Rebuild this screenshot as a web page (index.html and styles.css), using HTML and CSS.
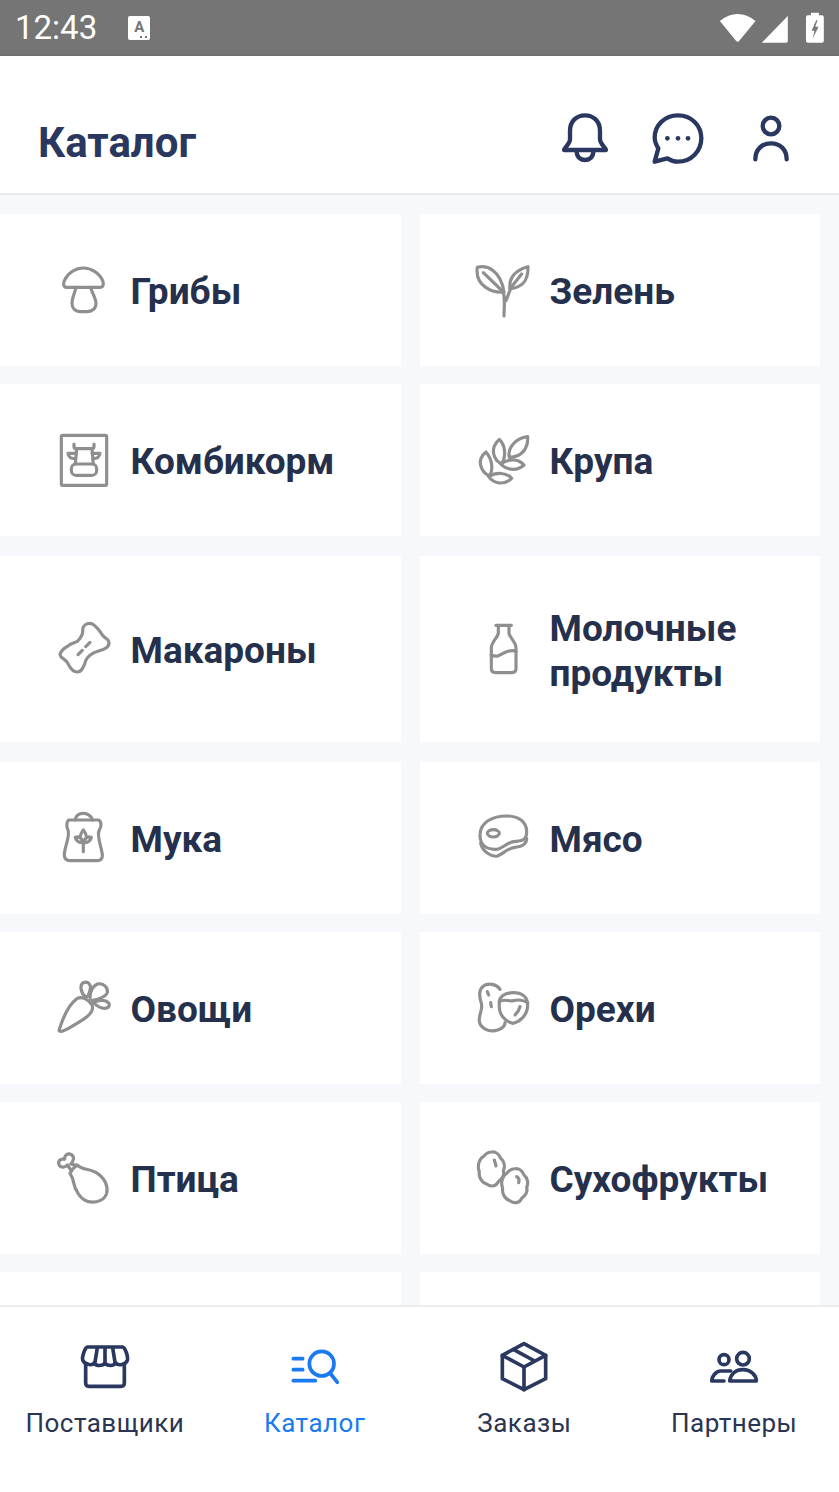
FILE: index.html
```html
<!DOCTYPE html>
<html lang="ru">
<head>
<meta charset="utf-8">
<title>Каталог</title>
<link rel="stylesheet" href="styles.css">
</head>
<body>
<div class="app">
  <div class="status">
    <span class="time">12:43</span>
    <span class="noti"><span class="noti-a">A</span><span class="noti-dots"></span></span>
    <svg class="status-icons" viewBox="590 30 330 100">
      <path class="sb" d="M597 60 C630 32 672 32 705 60 L656 120 Q651 126 646 120Z"/>
      <path class="sb" d="M803 45 V120 Q803 126 797 126 H724Z"/>
      <path class="sb" fill-rule="evenodd" d="M873 35 H897 V43 H906 Q912 43 912 49 V120 Q912 126 906 126 H864 Q858 126 858 120 V49 Q858 43 864 43 H873Z M889 58 L875 90 H884 L878 114 L896 78 H886 L893 58Z"/>
    </svg>
  </div>
  <header class="top">
    <h1 class="title">Каталог</h1>
    <div class="top-icons">
      <svg class="top-ico" viewBox="111 335 168 168">
        <path d="M150 395 C150 365 170 348 195 348 C220 348 240 365 240 395 V420 C240 435 258 445 258 452 H132 C132 445 150 435 150 420Z"/>
        <path d="M170 458 C172 490 218 490 220 458"/>
      </svg>
      <svg class="top-ico" viewBox="391 335 168 168">
        <path d="M405 487 L416 447 C408 434 405 425 405 415 C405 378 435 348 475 348 C515 348 545 378 545 417 C545 455 515 487 475 487 C462 487 452 483 443 477Z"/>
        <circle class="dot" cx="443" cy="417" r="7"/><circle class="dot" cx="475" cy="417" r="7"/><circle class="dot" cx="505" cy="417" r="7"/>
      </svg>
      <svg class="top-ico" viewBox="671 335 168 168">
        <circle cx="755" cy="380" r="25"/>
        <path d="M708 480 C708 450 728 432 755 432 C782 432 802 450 802 480"/>
      </svg>
    </div>
  </header>
  <main class="grid">
    <a class="card">
      <svg class="ico" viewBox="48 36 168 168">
        <path d="M80 112 C70 112 68 100 74 90 C84 68 108 54 130 54 C152 54 178 68 188 92 C192 102 190 112 180 112Z"/>
        <path d="M108 112 C104 130 96 145 96 160 C96 176 106 185 120 185 H140 C156 185 168 176 168 160 C168 145 156 130 152 112"/>
      </svg>
      <span class="label">Грибы</span>
    </a>
    <a class="card alt">
      <svg class="ico" viewBox="45 36 168 168">
        <path d="M52 52 C80 44 122 60 132 126 C100 130 44 110 52 52Z"/>
        <path d="M70 68 L130 126"/>
        <path d="M204 50 C205 90 190 112 150 116 C146 85 165 60 204 50Z"/>
        <path d="M185 72 L150 116"/>
        <path d="M132 198 C132 170 136 150 130 126 M138 152 L152 116"/>
      </svg>
      <span class="label">Зелень</span>
    </a>
    <a class="card">
      <svg class="ico" viewBox="48 546 168 168">
        <rect x="64" y="556" width="136" height="150" rx="4"/>
        <path d="M102 582 V590 Q102 596 110 596 H154 Q162 596 162 590 V582"/>
        <path d="M110 596 L106 642 M156 596 L160 642"/>
        <rect x="94" y="642" width="76" height="34" rx="14"/>
        <path d="M108 610 H84 Q86 626 106 626 M156 610 H180 Q178 626 158 626"/>
      </svg>
      <span class="label">Комбикорм</span>
    </a>
    <a class="card alt">
      <svg class="ico" viewBox="45 546 168 168">
        <path d="M203 560 C205 595 185 622 148 622 C142 595 165 565 203 560Z"/>
        <path d="M118 568 C135 585 140 615 125 642 C100 630 88 595 118 568Z"/>
        <path d="M192 645 C170 665 140 660 122 642 C145 625 175 625 192 645Z"/>
        <path d="M78 606 C98 630 100 660 88 678 C62 665 48 630 78 606Z"/>
        <path d="M155 685 C130 708 100 700 86 680 C110 665 140 668 155 685Z"/>
      </svg>
      <span class="label">Крупа</span>
    </a>
    <a class="card tall">
      <svg class="ico" viewBox="48 63 168 168">
        <path d="M150 70 C138 70 128 78 128 90 C130 102 124 112 112 124 C100 130 92 130 84 138 C76 144 64 148 60 164 C62 176 76 176 82 188 C88 196 92 216 112 216 C126 216 128 204 134 192 C136 178 144 168 158 160 C170 152 188 152 198 144 C206 138 210 130 204 120 C196 112 188 110 184 100 C178 92 164 70 150 70Z"/>
        <path d="M137 140 L150 127 M114 164 L127 151"/>
      </svg>
      <span class="label">Макароны</span>
    </a>
    <a class="card alt tall">
      <svg class="ico" viewBox="45 63 168 168">
        <path d="M108 76 H154"/>
        <path d="M115 76 V100 C112 115 94 125 94 145 V205 Q94 218 106 218 H156 Q168 218 168 205 V145 C168 125 150 115 147 100 V76"/>
        <path d="M94 165 C115 175 125 160 140 155 C150 152 160 150 168 154"/>
      </svg>
      <span class="label">Молочные продукты</span>
    </a>
    <a class="card">
      <svg class="ico" viewBox="48 630 168 168">
        <path d="M86 660 C80 665 78 678 84 690 C92 705 72 745 73 765 C73 775 78 782 90 782 H172 C182 782 188 775 187 765 C186 745 168 705 178 690 C186 676 184 664 176 660Z"/>
        <path d="M105 660 C108 645 118 640 130 640 C142 640 152 645 158 660"/>
        <path d="M130 755 V728 M130 690 C118 705 118 715 130 725 C142 715 142 705 130 690Z M130 728 C118 730 108 722 106 712 C118 708 126 715 130 728 M130 728 C142 730 152 722 154 712 C142 708 134 715 130 728"/>
      </svg>
      <span class="label">Мука</span>
    </a>
    <a class="card alt">
      <svg class="ico" viewBox="45 630 168 168">
        <path d="M60 705 C60 665 100 648 140 648 C175 648 200 665 200 695 C200 725 180 722 160 725 C135 730 125 750 105 748 C80 748 60 735 60 705Z"/>
        <path d="M62 730 C68 755 95 772 112 768 C130 762 140 745 165 742 C185 740 200 735 200 715"/>
        <ellipse cx="100" cy="700" rx="18" ry="11"/>
      </svg>
      <span class="label">Мясо</span>
    </a>
    <a class="card">
      <svg class="ico" viewBox="48 60 168 168">
        <path d="M58 208 C70 170 90 130 112 115 C125 108 145 118 156 135 C162 150 150 165 130 178 C105 194 75 212 65 214 C58 215 56 212 58 208Z"/>
        <path d="M138 112 C122 100 118 75 130 68 C145 62 155 75 150 90 C148 100 145 108 138 112"/>
        <path d="M150 115 C150 100 155 80 172 72 C190 68 205 82 202 98 C198 112 175 118 155 122"/>
        <path d="M160 128 C175 118 200 118 208 132 C208 148 185 152 160 128Z"/>
      </svg>
      <span class="label">Овощи</span>
    </a>
    <a class="card alt">
      <svg class="ico" viewBox="45 60 168 168">
        <path d="M120 88 C110 72 85 68 70 78 C55 90 58 112 64 130 C70 148 55 165 58 185 C62 205 85 215 105 212 C120 210 135 200 135 188"/>
        <path d="M82 95 L86 105 M92 128 L94 140"/>
        <path d="M118 130 C116 110 135 98 160 98 C185 98 203 110 203 135 C203 165 180 185 160 190 C135 185 115 165 118 130Z"/>
        <path d="M118 125 C135 115 145 125 160 122 C175 118 190 120 203 128"/>
        <path d="M180 140 C178 150 172 158 165 165"/>
      </svg>
      <span class="label">Орехи</span>
    </a>
    <a class="card">
      <svg class="ico" viewBox="48 570 168 168">
        <path d="M112 615 C124 630 150 625 172 640 C195 655 205 680 200 700 C194 720 170 730 145 725 C120 718 105 690 100 665 C98 650 92 645 90 640 C94 630 105 620 112 615Z"/>
        <path d="M95 633 L82 615 C72 626 56 622 56 608 C56 598 68 596 74 598 C72 586 84 578 94 584 C104 590 102 602 92 612 L110 616"/>
      </svg>
      <span class="label">Птица</span>
    </a>
    <a class="card alt">
      <svg class="ico" viewBox="45 570 168 168">
        <path d="M95 576 C108 574 118 585 122 595 C135 605 135 622 130 632 C135 650 122 660 115 665 C108 682 90 680 80 672 C65 668 55 650 58 635 C50 615 60 595 70 590 C78 580 85 576 95 576Z"/>
        <path d="M103 600 L108 618"/>
        <path d="M165 626 C178 624 188 635 192 645 C205 655 205 672 200 682 C205 700 192 710 185 715 C178 732 160 730 150 722 C135 718 125 700 128 685 C120 665 130 645 140 640 C148 630 155 626 165 626Z"/>
        <path d="M170 650 C178 655 178 662 176 668"/>
      </svg>
      <span class="label">Сухофрукты</span>
    </a>
    <a class="card"></a>
    <a class="card alt"></a>
  </main>
  <nav class="nav">
    <a class="tab">
      <svg class="nav-ico" viewBox="231 296 168 168">
        <path d="M262 320 H368 C375 320 385 350 382 360 C378 372 355 378 347 368 C340 378 322 378 315 368 C308 378 288 378 282 368 C275 378 252 372 248 358 C246 350 255 320 262 320Z"/>
        <path d="M292 322 L285 366 M315 322 V366 M338 322 L345 366"/>
        <path d="M257 372 V428 Q257 438 267 438 H363 Q373 438 373 428 V372"/>
      </svg>
      <span>Поставщики</span>
    </a>
    <a class="tab active">
      <svg class="nav-ico" viewBox="861 296 168 168">
        <path d="M880 355 H908 M880 388 H908 M880 421 H946"/>
        <circle cx="965" cy="370" r="37"/>
        <path d="M990 398 L1012 426"/>
      </svg>
      <span>Каталог</span>
    </a>
    <a class="tab">
      <svg class="nav-ico" viewBox="231 296 168 168">
        <path d="M315 310 L380 345 V415 L315 448 L250 415 V345Z"/>
        <path d="M250 345 L315 380 L380 345 M315 380 V448 M283 327 L347 362"/>
      </svg>
      <span>Заказы</span>
    </a>
    <a class="tab">
      <svg class="nav-ico" viewBox="861 296 168 168">
        <circle cx="915" cy="358" r="15"/>
        <circle cx="972" cy="355" r="19"/>
        <path d="M935 392 H905 C890 392 878 410 878 422 H915"/>
        <path d="M932 422 C935 400 950 388 972 388 C995 388 1012 405 1012 422Z"/>
      </svg>
      <span>Партнеры</span>
    </a>
  </nav>
</div>
</body>
</html>
```
FILE: styles.css
```css
* { box-sizing: border-box; }
html, body { margin: 0; padding: 0; }
body { font-family: Roboto, "Liberation Sans", sans-serif; background: #fff; }
.app { width: 839px; height: 1492px; display: flex; flex-direction: column; overflow: hidden; }

.status { height: 56px; flex: none; background: #757575; border-bottom: 2px solid #6f6f6f; display: flex; align-items: center; padding: 0 12px 0 15px; color: #fff; }
.time { font-size: 33px; line-height: 56px; color: #fff; padding-top: 1px; }
.noti { margin-left: 31px; margin-top: 2px; width: 22px; height: 24px; background: #fff; border-radius: 2px; position: relative; display: flex; justify-content: center; }
.noti-a { font-size: 15px; font-weight: 700; line-height: 22px; color: #757575; }
.noti-dots { position: absolute; right: 3px; bottom: 2px; width: 7px; height: 0; border-bottom: 2px dotted #757575; }
.status-icons { margin-left: auto; width: 110px; height: 33px; }
.sb { fill: #fff; }

.top { height: 139px; flex: none; background: #fff; border-bottom: 2px solid #e8e9ec; display: flex; align-items: center; justify-content: space-between; padding: 28px 40px 0 38px; }
.title { margin: 4px 0 0; padding-top: 4px; font-size: 42px; line-height: 46px; font-weight: 700; color: #2a3860; }
.top-icons { display: flex; gap: 37px; }
.top-ico { width: 56px; height: 56px; display: block; fill: none; stroke: #2a3860; stroke-width: 13; stroke-linecap: round; stroke-linejoin: round; }
.top-ico .dot { fill: #2a3860; stroke: none; }

.grid { flex: 1; min-height: 0; overflow: hidden; background: #f6f8fc; display: grid; grid-template-columns: 401px 400px; grid-template-rows: 152px 152px 190px; grid-auto-rows: 152px; column-gap: 19px; row-gap: 18px; padding: 19px 19px 0 0; align-content: start; }
.card { background: #fff; display: flex; align-items: center; gap: 18.5px; padding-left: 56px; }
.card.alt { padding-left: 55px; }
.card.tall { height: 186px; margin-top: 2px; }
.ico { width: 56px; height: 56px; flex: none; fill: none; stroke: #8f8f8f; stroke-width: 9.5; stroke-linecap: round; stroke-linejoin: round; }
.label { font-size: 37px; line-height: 45px; padding-top: 3px; font-weight: 700; color: #25304d; }
.alt .label { max-width: 240px; }

.nav { height: 187px; flex: none; background: #fff; border-top: 2px solid #ececee; display: grid; grid-template-columns: repeat(4, 1fr); }
.tab { display: flex; flex-direction: column; align-items: center; padding-top: 32px; color: #2a3552; font-size: 26px; line-height: 32px; letter-spacing: 0.5px; }
.tab span { margin-top: 12px; }
.nav-ico { width: 56px; height: 56px; display: block; fill: none; stroke: #2a3860; stroke-width: 11; stroke-linecap: round; stroke-linejoin: round; }
.active { color: #1a7af0; }
.active .nav-ico { stroke: #1a7af0; }
```
